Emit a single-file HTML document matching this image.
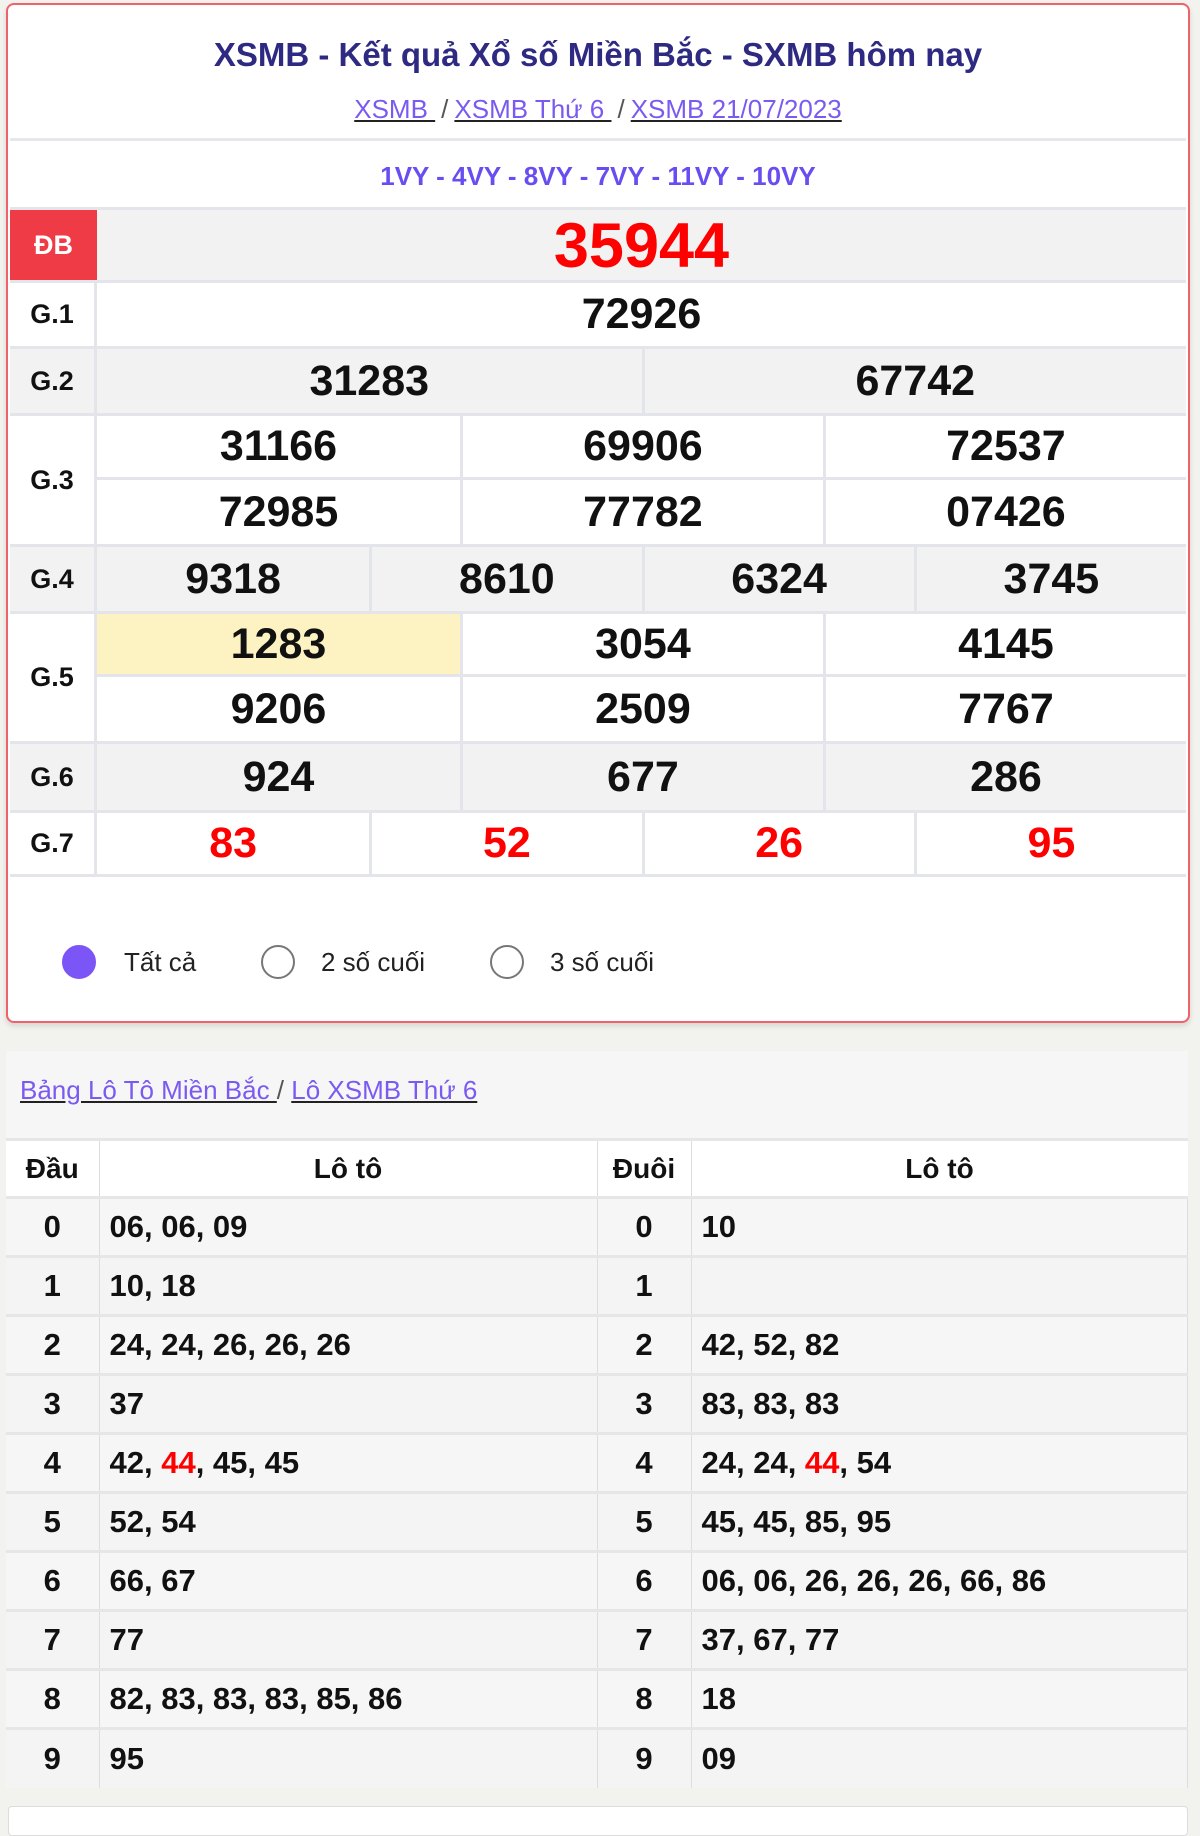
<!DOCTYPE html>
<html><head><meta charset="utf-8"><style>
*{box-sizing:border-box;margin:0;padding:0}
body{width:1200px;height:1822px;background:#f2f2ee;font-family:"Liberation Sans",Arial,sans-serif;position:relative;overflow:hidden}
.card{position:absolute;left:6px;top:3px;width:1184px;height:1020px;background:#fff;border:2px solid #f0626a;border-radius:8px;box-shadow:0 3px 6px rgba(0,0,0,.12)}
.title{position:absolute;top:31px;left:0;width:100%;text-align:center;font-weight:bold;font-size:33px;color:#2e2a82}
.bc{position:absolute;top:89px;left:0;width:100%;text-align:center;font-size:26px;color:#7a5af0}
.bc a{color:#7a5af0;text-decoration:underline;text-decoration-color:#222}
.bc span{color:#555;margin:0 6px}
.sep{position:absolute;left:2px;right:2px;top:133px;height:3px;background:#e6e7ec}
.codes{position:absolute;top:156px;left:0;width:100%;text-align:center;font-size:26px;font-weight:bold;color:#6a4df0}
.tbl{position:absolute;left:2px;top:202px;width:1176px}
.row{display:flex;border-top:3px solid #e3e5ea}
.lab{width:87px;flex:none;display:flex;align-items:center;justify-content:center;font-weight:bold;font-size:27px;color:#111;border-right:3px solid #e3e5ea}
.cells{flex:1;display:flex;flex-wrap:wrap}
.c{display:flex;align-items:center;justify-content:center;font-weight:bold;font-size:43px;color:#111;border-left:3px solid #e3e5ea}
.c.f{border-left:none}
.g{background:#f2f2f2}
.red{color:#f00}
.radios{position:absolute;top:938px;left:0;width:100%;height:40px}
.rd{position:absolute;top:2px;width:34px;height:34px;border-radius:50%;border:2px solid #777}
.rt{position:absolute;top:4px;font-size:26px;color:#222}
.low{position:absolute;left:6px;top:1051px;width:1182px;height:730px;background:#f6f6f7}
.links{position:absolute;left:20px;top:1075px;font-size:26px;color:#7a5af0}
.links a{color:#7a5af0;text-decoration:underline;text-decoration-color:#222}
table{position:absolute;left:6px;top:1138px;width:1182px;border-collapse:collapse;font-weight:bold;font-size:31px;color:#111}
td{height:59px;border-right:1px solid #ddd;border-top:3px solid #e6e6e6;padding-left:10px}
tr:nth-child(odd) td{background:#f4f4f4}
tr:first-child td{background:#fff;text-align:center;font-size:28px;padding:0;height:58px}
td.n{text-align:center;padding:0}
.bot{position:absolute;left:8px;top:1806px;width:1180px;height:30px;background:#fff;border:1px solid #ddd;border-radius:4px}
</style></head><body>
<div class="card">
<div class="title">XSMB - Kết quả Xổ số Miền Bắc - SXMB hôm nay</div>
<div class="bc"><a>XSMB </a><span>/</span><a>XSMB Thứ 6 </a><span>/</span><a>XSMB 21/07/2023</a></div>
<div class="sep"></div>
<div class="codes">1VY - 4VY - 8VY - 7VY - 11VY - 10VY</div>
<div class="tbl">
<div class="row g" style="height:73px"><div class="lab" style="background:#ee3b45;color:#fff;border-right:none">ĐB</div><div class="cells"><div class="c f red" style="width:100%;font-size:63px">35944</div></div></div>
<div class="row" style="height:66px"><div class="lab">G.1</div><div class="cells"><div class="c f" style="width:100%">72926</div></div></div>
<div class="row g" style="height:67px"><div class="lab">G.2</div><div class="cells"><div class="c f" style="width:50%">31283</div><div class="c" style="width:50%">67742</div></div></div>
<div class="row" style="height:131px"><div class="lab">G.3</div><div class="cells">
<div class="c f" style="width:33.33%;height:64px;border-bottom:3px solid #e3e5ea">31166</div><div class="c" style="width:33.33%;height:64px;border-bottom:3px solid #e3e5ea">69906</div><div class="c" style="width:33.34%;height:64px;border-bottom:3px solid #e3e5ea">72537</div>
<div class="c f" style="width:33.33%;height:64px">72985</div><div class="c" style="width:33.33%;height:64px">77782</div><div class="c" style="width:33.34%;height:64px">07426</div></div></div>
<div class="row g" style="height:67px"><div class="lab">G.4</div><div class="cells"><div class="c f" style="width:25%">9318</div><div class="c" style="width:25%">8610</div><div class="c" style="width:25%">6324</div><div class="c" style="width:25%">3745</div></div></div>
<div class="row" style="height:130px"><div class="lab">G.5</div><div class="cells">
<div class="c f" style="width:33.33%;height:63px;border-bottom:3px solid #e3e5ea;background:#fdf3c2">1283</div><div class="c" style="width:33.33%;height:63px;border-bottom:3px solid #e3e5ea">3054</div><div class="c" style="width:33.34%;height:63px;border-bottom:3px solid #e3e5ea">4145</div>
<div class="c f" style="width:33.33%;height:64px">9206</div><div class="c" style="width:33.33%;height:64px">2509</div><div class="c" style="width:33.34%;height:64px">7767</div></div></div>
<div class="row g" style="height:69px"><div class="lab">G.6</div><div class="cells"><div class="c f" style="width:33.33%">924</div><div class="c" style="width:33.33%">677</div><div class="c" style="width:33.34%">286</div></div></div>
<div class="row" style="height:67px;border-bottom:3px solid #e3e5ea"><div class="lab">G.7</div><div class="cells"><div class="c f red" style="width:25%">83</div><div class="c red" style="width:25%">52</div><div class="c red" style="width:25%">26</div><div class="c red" style="width:25%">95</div></div></div>
</div>
<div class="radios">
<div class="rd" style="left:54px;background:#7b55f5;border-color:#7b55f5"></div><div class="rt" style="left:116px">Tất cả</div>
<div class="rd" style="left:253px"></div><div class="rt" style="left:313px">2 số cuối</div>
<div class="rd" style="left:482px"></div><div class="rt" style="left:542px">3 số cuối</div>
</div>
</div>
<div class="low"></div>
<div class="links"><a>Bảng Lô Tô Miền Bắc </a> <span style="color:#555">/</span> <a>Lô XSMB Thứ 6</a></div>
<table>
<colgroup><col style="width:93px"><col style="width:498px"><col style="width:94px"><col></colgroup>
<tr><td>Đầu</td><td>Lô tô</td><td>Đuôi</td><td style="border-right:none">Lô tô</td></tr>
<tr><td class="n">0</td><td>06, 06, 09</td><td class="n">0</td><td>10</td></tr>
<tr><td class="n">1</td><td>10, 18</td><td class="n">1</td><td></td></tr>
<tr><td class="n">2</td><td>24, 24, 26, 26, 26</td><td class="n">2</td><td>42, 52, 82</td></tr>
<tr><td class="n">3</td><td>37</td><td class="n">3</td><td>83, 83, 83</td></tr>
<tr><td class="n">4</td><td>42, <span class="red">44</span>, 45, 45</td><td class="n">4</td><td>24, 24, <span class="red">44</span>, 54</td></tr>
<tr><td class="n">5</td><td>52, 54</td><td class="n">5</td><td>45, 45, 85, 95</td></tr>
<tr><td class="n">6</td><td>66, 67</td><td class="n">6</td><td>06, 06, 26, 26, 26, 66, 86</td></tr>
<tr><td class="n">7</td><td>77</td><td class="n">7</td><td>37, 67, 77</td></tr>
<tr><td class="n">8</td><td>82, 83, 83, 83, 85, 86</td><td class="n">8</td><td>18</td></tr>
<tr><td class="n">9</td><td>95</td><td class="n">9</td><td>09</td></tr>
</table>
<div class="bot"></div>
</body></html>
